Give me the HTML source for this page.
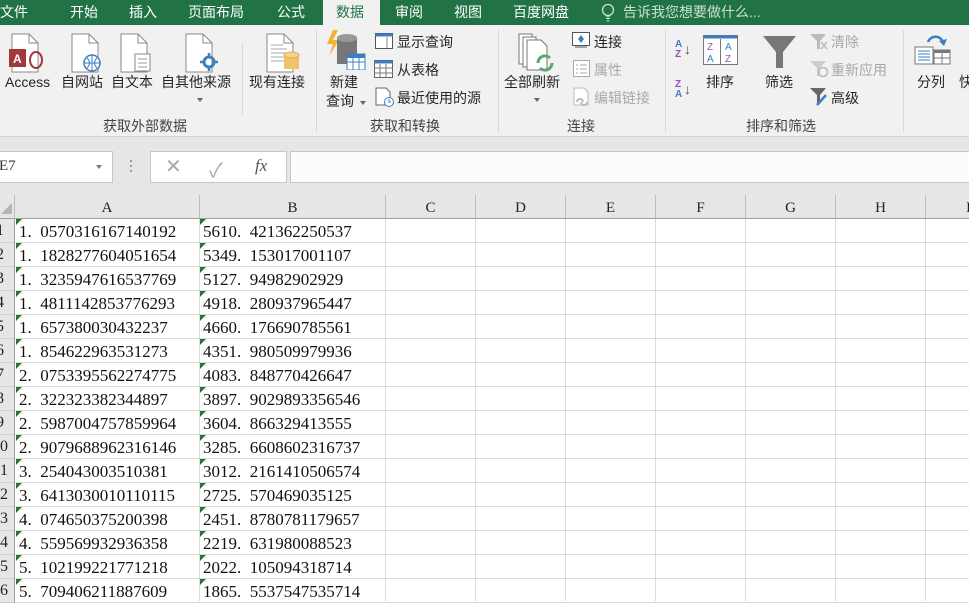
<!DOCTYPE html>
<html><head><meta charset="utf-8"><style>
*{margin:0;padding:0;box-sizing:border-box}
body{width:969px;height:601px;overflow:hidden;background:#fff;font-family:"Liberation Sans","Noto Sans CJK SC",sans-serif;position:relative}
.abs{position:absolute}
#tabs{left:0;top:0;width:969px;height:25px;background:#217346}
.tab{position:absolute;top:2px;color:#fff;font-size:14px;line-height:20px}
#rib{left:0;top:25px;width:969px;height:112px;background:#f1f1f1;border-bottom:1px solid #d4d4d4}
.lbl{position:absolute;font-size:14px;color:#262626;line-height:18px;white-space:nowrap}
.gl{position:absolute;top:92px;font-size:14px;color:#444;line-height:18px}
.sep{position:absolute;top:5px;width:1px;height:102px;background:#d8d8d8}
.dis{color:#a8a8a8}
#fb{left:0;top:137px;width:969px;height:58px;background:#e6e6e6}
.box{position:absolute;background:#fff;border:1px solid #c6c6c6}
#grid{left:0;top:195px;width:969px;height:406px;background:#fff}
.ch{position:absolute;top:0;height:24px;background:#e6e6e6;border-right:1px solid #bdbdbd;border-bottom:1px solid #9e9e9e;text-align:center;font-family:"Liberation Serif","Noto Serif CJK SC",serif;font-size:15px;line-height:26px;color:#222}
.rh{position:absolute;left:0;width:15px;height:24px;background:#e6e6e6;border-bottom:1px solid #cfcfcf;border-right:1px solid #9e9e9e;overflow:hidden;font-family:"Liberation Serif",serif;font-size:16px;line-height:24px;color:#222}
.rh span{position:absolute;top:0;white-space:nowrap}
.hl{position:absolute;left:15px;width:954px;height:1px;background:#dadada}
.vl{position:absolute;top:24px;width:1px;height:382px;background:#dadada}
.c{position:absolute;font-family:"Liberation Serif",serif;font-size:17px;color:#111;line-height:24px;white-space:pre}
.tri{position:absolute;width:0;height:0;border-top:6px solid #1e7b30;border-right:6px solid transparent}
</style></head><body>
<div id="tabs" class="abs">
<div class="tab" style="left:0">文件</div>
<div class="tab" style="left:70px">开始</div>
<div class="tab" style="left:129px">插入</div>
<div class="tab" style="left:188px">页面布局</div>
<div class="tab" style="left:277px">公式</div>
<div class="abs" style="left:323px;top:0;width:57px;height:25px;background:#f1f1f1"></div>
<div class="tab" style="left:336px;color:#217346">数据</div>
<div class="tab" style="left:395px">审阅</div>
<div class="tab" style="left:454px">视图</div>
<div class="tab" style="left:513px">百度网盘</div>
<svg class="abs" style="left:601px;top:3px" width="14" height="19"><circle cx="7" cy="7" r="5.5" fill="none" stroke="#cfe3d6" stroke-width="1.3"/><path d="M5 13h4M5 15.5h4M6 18h2" stroke="#cfe3d6" stroke-width="1.3"/></svg>
<div class="tab" style="left:623px;color:#c9e0d0">告诉我您想要做什么...</div>
</div>

<div id="rib" class="abs">
<svg class="abs" style="left:8px;top:8px" width="36" height="40"><path d="M4 1h17l9 9v29H4z" fill="#fff" stroke="#888"/><path d="M21 1v9h9" fill="none" stroke="#888"/><rect x="1" y="16" width="17" height="18" fill="#a4373a"/><text x="5" y="30" font-size="12" fill="#fff" font-family="Liberation Sans" font-weight="bold">A</text><ellipse cx="28" cy="27" rx="6" ry="8" fill="none" stroke="#a4373a" stroke-width="2"/></svg>
<div class="lbl" style="left:5px;top:48px">Access</div>
<svg class="abs" style="left:70px;top:8px" width="36" height="40"><path d="M2 1h17l9 9v29H2z" fill="#fff" stroke="#888"/><path d="M19 1v9h9" fill="none" stroke="#888"/><circle cx="22" cy="30" r="8" fill="#fff" stroke="#3c7fc1" stroke-width="1.5"/><path d="M14 30h16M22 22v16M17 25q5 5 0 10M27 25q-5 5 0 10" stroke="#3c7fc1" fill="none"/></svg>
<div class="lbl" style="left:61px;top:48px">自网站</div>
<svg class="abs" style="left:119px;top:8px" width="36" height="40"><path d="M2 1h17l9 9v29H2z" fill="#fff" stroke="#888"/><path d="M19 1v9h9" fill="none" stroke="#888"/><rect x="16" y="21" width="15" height="17" fill="#fff" stroke="#888"/><path d="M19 26h9M19 30h9M19 34h9" stroke="#999"/></svg>
<div class="lbl" style="left:111px;top:48px">自文本</div>
<svg class="abs" style="left:184px;top:8px" width="36" height="40"><path d="M2 1h17l9 9v29H2z" fill="#fff" stroke="#888"/><path d="M19 1v9h9" fill="none" stroke="#888"/><circle cx="25" cy="29" r="5" fill="none" stroke="#3c7fc1" stroke-width="3"/><path d="M25 20v5M25 33v5M16 29h5M29 29h5" stroke="#3c7fc1" stroke-width="2.5"/></svg>
<div class="lbl" style="left:161px;top:48px">自其他来源</div>
<div class="abs" style="left:197px;top:73px;border-top:4px solid #666;border-left:3px solid transparent;border-right:3px solid transparent"></div>
<div class="sep" style="left:242px;top:18px;height:72px"></div>
<svg class="abs" style="left:265px;top:8px" width="38" height="40"><path d="M2 1h17l9 9v29H2z" fill="#fff" stroke="#888"/><path d="M19 1v9h9" fill="none" stroke="#888"/><path d="M6 12h12M6 16h16M6 20h16M6 24h16M6 28h14" stroke="#aaa"/><rect x="19" y="22" width="15" height="14" fill="#f0c36b"/><ellipse cx="26.5" cy="22" rx="7.5" ry="3" fill="#f6d38a" stroke="#e0ad4f"/></svg>
<div class="lbl" style="left:249px;top:48px">现有连接</div>
<div class="gl" style="left:103px">获取外部数据</div>
<div class="sep" style="left:316px"></div>

<svg class="abs" style="left:325px;top:5px" width="42" height="40"><path d="M8 0l-6 14h6l-4 12 10-16H8l5-10z" fill="#f2b233"/><rect x="12" y="8" width="20" height="26" fill="#777"/><ellipse cx="22" cy="8" rx="10" ry="4" fill="#999"/><rect x="22" y="24" width="18" height="16" fill="#fff" stroke="#3c7fc1"/><rect x="22" y="24" width="18" height="4" fill="#3c7fc1"/><path d="M22 32h18M28 28v12M34 28v12" stroke="#3c7fc1"/></svg>
<div class="lbl" style="left:330px;top:48px">新建</div>
<div class="lbl" style="left:326px;top:67px">查询</div>
<div class="abs" style="left:360px;top:76px;border-top:4px solid #666;border-left:3px solid transparent;border-right:3px solid transparent"></div>
<svg class="abs" style="left:375px;top:8px" width="18" height="16"><rect x="0.5" y="0.5" width="17" height="15" fill="#fff" stroke="#555"/><rect x="0.5" y="0.5" width="17" height="3" fill="#3c7fc1"/><path d="M12 4v11" stroke="#888"/></svg>
<div class="lbl" style="left:397px;top:8px">显示查询</div>
<svg class="abs" style="left:374px;top:35px" width="19" height="18"><rect x="0.5" y="0.5" width="18" height="17" fill="#fff" stroke="#666"/><rect x="0.5" y="0.5" width="18" height="3" fill="#3c7fc1"/><path d="M1 8h18M1 13h18M6 4v14M12 4v14" stroke="#777"/></svg>
<div class="lbl" style="left:397px;top:36px">从表格</div>
<svg class="abs" style="left:375px;top:62px" width="20" height="20"><path d="M1 1h10l4 4v13H1z" fill="#fff" stroke="#666"/><circle cx="14" cy="15" r="4.5" fill="#fff" stroke="#3c7fc1"/><path d="M14 12v3h2" stroke="#3c7fc1" fill="none"/></svg>
<div class="lbl" style="left:397px;top:64px">最近使用的源</div>
<div class="gl" style="left:370px">获取和转换</div>
<div class="sep" style="left:498px"></div>

<svg class="abs" style="left:518px;top:8px" width="40" height="40"><path d="M1 1h13v30H1z" fill="#fff" stroke="#777"/><path d="M5 4h13v30H5z" fill="#fff" stroke="#777"/><path d="M9 7h14l6 6v24H9z" fill="#fff" stroke="#777"/><path d="M20 30a7 7 0 0 1 12-5M34 30a7 7 0 0 1-12 5" stroke="#5aa86f" stroke-width="3" fill="none"/></svg>
<div class="lbl" style="left:504px;top:48px">全部刷新</div>
<div class="abs" style="left:534px;top:73px;border-top:4px solid #666;border-left:3px solid transparent;border-right:3px solid transparent"></div>
<svg class="abs" style="left:572px;top:7px" width="20" height="18"><rect x="0.5" y="0.5" width="17" height="13" fill="#fff" stroke="#555"/><path d="M9 3l3 4-3 4-3-4z" fill="#3c7fc1"/><path d="M3 15h12" stroke="#555"/></svg>
<div class="lbl" style="left:594px;top:8px">连接</div>
<svg class="abs" style="left:573px;top:35px" width="18" height="18"><rect x="0.5" y="0.5" width="16" height="16" fill="#fff" stroke="#aaa"/><path d="M3 5h2M7 5h7M3 9h2M7 9h7M3 13h2M7 13h7" stroke="#aaa"/></svg>
<div class="lbl dis" style="left:594px;top:36px">属性</div>
<svg class="abs" style="left:573px;top:62px" width="18" height="20"><path d="M1 1h10l4 4v13H1z" fill="#fff" stroke="#bbb"/><path d="M4 15a3 3 0 0 1 6 0M8 15a3 3 0 0 0 6 0" stroke="#bbb" stroke-width="2" fill="none"/></svg>
<div class="lbl dis" style="left:594px;top:64px">编辑链接</div>
<div class="gl" style="left:567px">连接</div>
<div class="sep" style="left:665px"></div>

<div class="abs" style="left:675px;top:15px;font-size:10px;line-height:10px;font-weight:bold;color:#3c7fc1">A<br><span style="color:#9b4fb5">Z</span></div>
<div class="abs" style="left:684px;top:16px;font-size:14px;color:#555">↓</div>
<div class="abs" style="left:675px;top:55px;font-size:10px;line-height:10px;font-weight:bold;color:#9b4fb5">Z<br><span style="color:#3c7fc1">A</span></div>
<div class="abs" style="left:684px;top:56px;font-size:14px;color:#555">↓</div>
<svg class="abs" style="left:703px;top:10px" width="36" height="31"><rect x="0.5" y="0.5" width="34" height="29" fill="#fff" stroke="#777"/><rect x="0.5" y="0.5" width="34" height="3" fill="#3c7fc1"/><path d="M17.5 4v26" stroke="#777"/><text x="4" y="15" font-size="10" fill="#9b4fb5" font-family="Liberation Sans">Z</text><text x="4" y="27" font-size="10" fill="#3c7fc1" font-family="Liberation Sans">A</text><text x="22" y="15" font-size="10" fill="#3c7fc1" font-family="Liberation Sans">A</text><text x="22" y="27" font-size="10" fill="#9b4fb5" font-family="Liberation Sans">Z</text></svg>
<div class="lbl" style="left:706px;top:48px">排序</div>
<svg class="abs" style="left:763px;top:10px" width="34" height="34"><path d="M0 1h33L20 17v16h-7V17z" fill="#777"/></svg>
<div class="lbl" style="left:765px;top:48px">筛选</div>
<svg class="abs" style="left:809px;top:8px" width="20" height="18"><path d="M1 1h16l-6 7v8h-3V8z" fill="#bbb"/><path d="M12 9l6 7M18 9l-6 7" stroke="#bbb" stroke-width="1.5"/></svg>
<div class="lbl dis" style="left:831px;top:8px">清除</div>
<svg class="abs" style="left:809px;top:35px" width="20" height="18"><path d="M1 1h16l-6 7v8h-3V8z" fill="#ccc"/><circle cx="14" cy="12" r="4.5" fill="none" stroke="#bbb" stroke-width="1.5"/></svg>
<div class="lbl dis" style="left:831px;top:36px">重新应用</div>
<svg class="abs" style="left:809px;top:62px" width="20" height="20"><path d="M1 1h16l-6 7v8h-3V8z" fill="#666"/><path d="M8 18l9-10" stroke="#3c7fc1" stroke-width="2.5"/></svg>
<div class="lbl" style="left:831px;top:64px">高级</div>
<div class="gl" style="left:746px">排序和筛选</div>
<div class="sep" style="left:903px"></div>
<svg class="abs" style="left:914px;top:8px" width="40" height="32"><path d="M14 9a8 8 0 0 1 15 0" stroke="#3c7fc1" stroke-width="2.5" fill="none"/><path d="M25 8l5 5 3-7z" fill="#3c7fc1"/><rect x="1" y="14" width="18" height="17" fill="#fff" stroke="#777"/><path d="M4 18h12M4 21h12M4 24h12M4 27h12" stroke="#3c7fc1"/><rect x="20" y="17" width="16" height="14" fill="#fff" stroke="#777"/><rect x="20" y="17" width="16" height="3" fill="#777"/><path d="M28 20v11M20 25h16" stroke="#777"/></svg>
<div class="lbl" style="left:917px;top:48px">分列</div>
<div class="lbl" style="left:959px;top:48px">快</div>
</div>

<div id="fb" class="abs">
<div class="box" style="left:-2px;top:14px;width:115px;height:32px"><span class="abs" style="left:0;top:6px;font-size:15px;color:#333;font-family:'Liberation Serif',serif">E7</span><span class="abs" style="left:97px;top:13px;border-top:4px solid #777;border-left:3px solid transparent;border-right:3px solid transparent"></span></div>
<div class="abs" style="left:130px;top:23px;width:2px;height:2px;background:#999;box-shadow:0 5px #999,0 10px #999"></div>
<div class="box" style="left:150px;top:14px;width:137px;height:32px">
<span class="abs" style="left:14px;top:2px;font-size:20px;color:#aaa">✕</span>
<span class="abs" style="left:58px;top:2px;font-size:20px;color:#aaa">✓</span>
<span class="abs" style="left:104px;top:4px;font-size:17px;color:#555;font-style:italic;font-family:'Liberation Serif',serif">fx</span></div>
<div class="box" style="left:290px;top:14px;width:690px;height:32px;background:#fcfcfc"></div>
</div>

<div id="grid" class="abs">
<div class="abs" style="left:0;top:0;width:15px;height:24px;background:#e6e6e6;border-right:1px solid #bdbdbd;border-bottom:1px solid #9e9e9e"></div>
<div class="abs" style="left:1px;top:8px;width:0;height:0;border-bottom:11px solid #b5b5b5;border-left:11px solid transparent"></div>
<div class="ch" style="left:15px;width:185px">A</div>
<div class="ch" style="left:200px;width:186px">B</div>
<div class="ch" style="left:386px;width:90px">C</div>
<div class="ch" style="left:476px;width:90px">D</div>
<div class="ch" style="left:566px;width:90px">E</div>
<div class="ch" style="left:656px;width:90px">F</div>
<div class="ch" style="left:746px;width:90px">G</div>
<div class="ch" style="left:836px;width:90px">H</div>
<div class="ch" style="left:926px;width:60px;text-align:left;padding-left:40px">I</div>
<div class="vl" style="left:199px"></div><div class="vl" style="left:385px"></div><div class="vl" style="left:475px"></div><div class="vl" style="left:565px"></div><div class="vl" style="left:655px"></div><div class="vl" style="left:745px"></div><div class="vl" style="left:835px"></div><div class="vl" style="left:925px"></div>
<div id="rows"></div>
</div>
<script>
var a=["1.0570316167140192","1.1828277604051654","1.3235947616537769","1.4811142853776293","1.657380030432237","1.854622963531273","2.0753395562274775","2.322323382344897","2.5987004757859964","2.9079688962316146","3.254043003510381","3.6413030010110115","4.074650375200398","4.559569932936358","5.102199221771218","5.709406211887609"];
var b=["5610.421362250537","5349.153017001107","5127.94982902929","4918.280937965447","4660.176690785561","4351.980509979936","4083.848770426647","3897.9029893356546","3604.866329413555","3285.6608602316737","3012.2161410506574","2725.570469035125","2451.8780781179657","2219.631980088523","2022.105094318714","1865.5537547535714"];
function f(s){return s.replace(".",".\u2002");}
var h="";
for(var i=0;i<16;i++){var t=24+i*24;var r=(i<9)?10:6;
h+='<div class="rh" style="top:'+t+'px"><span style="right:'+r+'px">'+(i+1)+'</span></div>';
h+='<div class="hl" style="top:'+(t+23)+'px"></div>';
h+='<div class="tri" style="left:16px;top:'+t+'px"></div><div class="tri" style="left:200px;top:'+t+'px"></div>';
h+='<div class="c" style="left:19px;top:'+(t+1)+'px">'+f(a[i])+'</div>';
h+='<div class="c" style="left:203px;top:'+(t+1)+'px">'+f(b[i])+'</div>';}
document.getElementById("rows").innerHTML=h;
</script>
</body></html>
